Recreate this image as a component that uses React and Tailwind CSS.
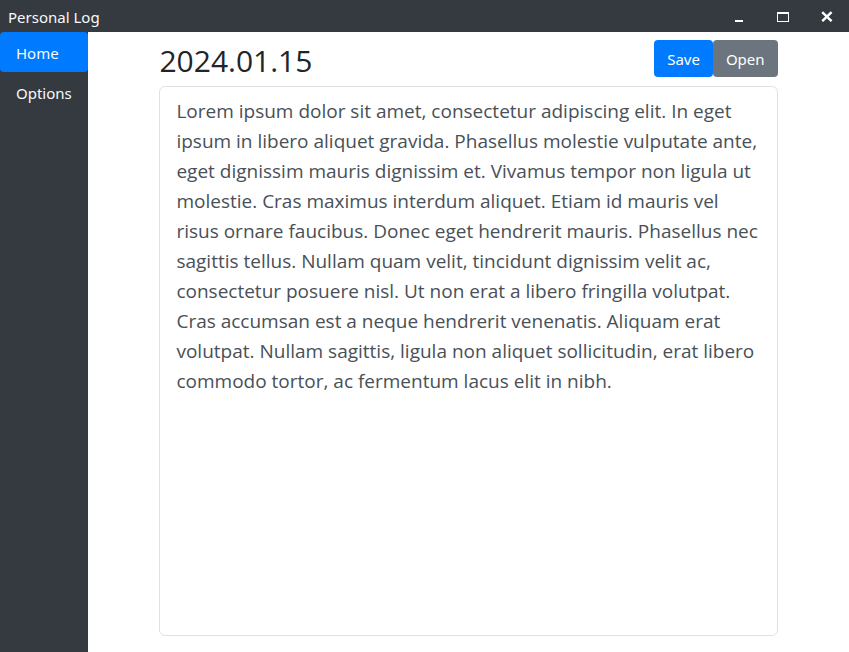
import { useState } from "react";

const ENTRY =
  "Lorem ipsum dolor sit amet, consectetur adipiscing elit. In eget ipsum in libero aliquet gravida. Phasellus molestie vulputate ante, eget dignissim mauris dignissim et. Vivamus tempor non ligula ut molestie. Cras maximus interdum aliquet. Etiam id mauris vel risus ornare faucibus. Donec eget hendrerit mauris. Phasellus nec sagittis tellus. Nullam quam velit, tincidunt dignissim velit ac, consectetur posuere nisl. Ut non erat a libero fringilla volutpat. Cras accumsan est a neque hendrerit venenatis. Aliquam erat volutpat. Nullam sagittis, ligula non aliquet sollicitudin, erat libero commodo tortor, ac fermentum lacus elit in nibh.";

function TitleBar() {
  return (
    <header className="flex h-8 shrink-0 items-center justify-between bg-[#343a40] pl-2 text-[15px] text-[#f8f9fa]">
      <span className="pt-0.5">Personal Log</span>
      <div className="flex h-full text-white">
        <button type="button" aria-label="Minimize" className="flex w-11 items-center justify-center">
          <svg width="12" height="12" viewBox="0 0 12 12" fill="currentColor" aria-hidden="true">
            <path d="M2 10h8v2H2z" />
          </svg>
        </button>
        <button type="button" aria-label="Maximize" className="flex w-11 items-center justify-center">
          <svg width="12" height="12" viewBox="0 0 12 12" fill="currentColor" aria-hidden="true">
            <path fillRule="evenodd" d="M0 2h12v10H0zM1 4v7h10V4z" />
          </svg>
        </button>
        <button type="button" aria-label="Close" className="flex w-11 items-center justify-center">
          <svg width="12" height="12" viewBox="0 0 12 12" stroke="currentColor" strokeWidth="2.4" aria-hidden="true">
            <path d="M1.2 2.2l9.4 9M10.6 2.2l-9.4 9" />
          </svg>
        </button>
      </div>
    </header>
  );
}

function Sidebar() {
  return (
    <nav className="flex w-22 shrink-0 flex-col bg-[#343a40] text-[15px] leading-6 text-[#f8f9fa]">
      <a href="#home" aria-current="page" className="rounded bg-[#007bff] px-4 pt-[9px] pb-[7px]">
        Home
      </a>
      <a href="#options" className="rounded px-4 pt-[9px] pb-[7px]">
        Options
      </a>
    </nav>
  );
}

export default function App() {
  const [text, setText] = useState(ENTRY);
  return (
    <div className="flex h-screen flex-col bg-white font-['Noto_Sans','Open_Sans',sans-serif]">
      <TitleBar />
      <div className="flex min-h-0 flex-1">
        <Sidebar />
        <main className="flex min-w-0 flex-1 justify-center">
          <div className="flex w-10/12 flex-col px-2 pt-2 pb-4">
            <div className="flex justify-between pb-2">
              <h1 id="entry-date" className="pt-1 font-['Open_Sans',sans-serif] text-[30px] leading-[34px] text-[#212529]">
                2024.01.15
              </h1>
              <div className="flex h-[38px] pb-px text-[15px] text-white">
                <button type="button" className="rounded bg-[#007bff] px-[13px] pt-0.5">
                  Save
                </button>
                <button type="button" className="rounded bg-[#6c757d] px-[13px] pt-0.5">
                  Open
                </button>
              </div>
            </div>
            <textarea
              aria-labelledby="entry-date"
              spellCheck={false}
              value={text}
              onChange={(e) => setText(e.target.value)}
              className="block w-full flex-1 resize-none rounded-md border border-[#dee2e6] bg-white px-4 pt-[9px] pb-2 font-['Open_Sans',sans-serif] text-[19px] leading-[30px] text-[#495057] outline-none"
            />
          </div>
        </main>
      </div>
    </div>
  );
}
